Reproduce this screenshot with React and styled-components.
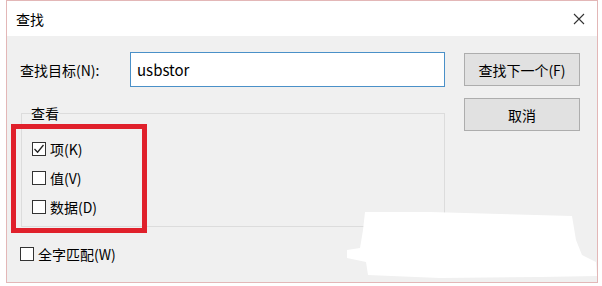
import React from 'react';
import styled, { createGlobalStyle } from 'styled-components';

const GlobalStyle = createGlobalStyle`
    html, body {
        margin: 0;
        padding: 0;
        background: #ffffff;
    }
    body {
        font-family: 'Noto Sans CJK SC', 'Noto Sans', sans-serif;
        color: #000;
    }
`;

const Page = styled.div`
    position: relative;
    width: 602px;
    height: 286px;
    overflow: hidden;
    padding-left: 6px;
    box-sizing: border-box;
`;

const Window = styled.div`
    width: 592px;
    height: 283px;
    box-sizing: border-box;
    border: 1px solid #e3b7b7;
    background: #f0f0f0;
    display: flex;
    flex-direction: column;
`;

const TitleBar = styled.div`
    height: 35px;
    background: #ffffff;
    display: flex;
    align-items: center;
    justify-content: space-between;
    padding: 0 12px 0 9px;
    font-size: 14px;
    flex-shrink: 0;
`;

const Body = styled.div`
    display: flex;
    padding: 16px 0 0 13px;
`;

const Form = styled.div`
    display: flex;
    flex-direction: column;
    width: 425px;
`;

const FieldRow = styled.div`
    display: flex;
    align-items: center;
`;

const Label = styled.label`
    width: 110px;
    font-size: 14px;
`;

const Input = styled.div`
    width: 315px;
    height: 35px;
    box-sizing: border-box;
    border: 1px solid #4a90c8;
    background: #fff;
    padding: 0 6px;
    display: flex;
    align-items: center;
    font-size: 15px;
`;

const Group = styled.fieldset`
    margin: 18px 0 0 1px;
    padding: 13px 0 5px 10px;
    border: 1px solid #dcdcdc;
    width: 424px;
    box-sizing: border-box;
`;

const Legend = styled.legend`
    padding: 0;
    margin-left: -1px;
    font-size: 14px;
    line-height: 16px;
`;

const CheckRow = styled.div`
    height: 29px;
    display: flex;
    align-items: center;
    gap: 4px;
    font-size: 14px;
    margin-top: ${p => p.$top || 0}px;
`;

const Box = styled.span`
    width: 14px;
    height: 14px;
    box-sizing: border-box;
    border: 1px solid #333;
    background: #fff;
    display: inline-flex;
    align-items: center;
    justify-content: center;
    flex-shrink: 0;
`;

const Buttons = styled.div`
    display: flex;
    flex-direction: column;
    gap: 12px;
    margin: 1px 0 0 19px;
`;

const Button = styled.div`
    width: 116px;
    height: 33px;
    box-sizing: border-box;
    border: 1px solid #adadad;
    background: #e1e1e1;
    display: flex;
    align-items: center;
    justify-content: center;
    font-size: 14px;
`;

const Highlight = styled.div`
    position: absolute;
    left: 11px;
    top: 124px;
    width: 136px;
    height: 109px;
    box-sizing: border-box;
    border: 5px solid #e0202b;
`;

const Erase = styled.svg`
    position: absolute;
    left: 0;
    top: 0;
`;

const CheckBox = ({ checked, label, top }) => (
    <CheckRow $top={top}>
        <Box>
            {checked && (
                <svg width="12" height="12" viewBox="0 0 12 12">
                    <path d="M1.5 6 L4.6 9.2 L10.5 2" fill="none" stroke="#222" strokeWidth="1.3" />
                </svg>
            )}
        </Box>
        <span>{label}</span>
    </CheckRow>
);

const App = () => (
    <Page>
        <GlobalStyle />
        <Window>
            <TitleBar>
                <span>查找</span>
                <svg width="12" height="12" viewBox="0 0 12 12">
                    <path d="M1 1 L11 11 M11 1 L1 11" stroke="#333" strokeWidth="1.1" />
                </svg>
            </TitleBar>
            <Body>
                <Form>
                    <FieldRow>
                        <Label>查找目标(N):</Label>
                        <Input>usbstor</Input>
                    </FieldRow>
                    <Group>
                        <Legend>查看</Legend>
                        <CheckBox checked label="项(K)" />
                        <CheckBox label="值(V)" />
                        <CheckBox label="数据(D)" />
                    </Group>
                    <CheckBox label="全字匹配(W)" top={12} />
                </Form>
                <Buttons>
                    <Button>查找下一个(F)</Button>
                    <Button>取消</Button>
                </Buttons>
            </Body>
        </Window>
        <Highlight />
        <Erase width="602" height="286">
            <polygon
                fill="#ffffff"
                points="365,212 430,212 500,214 572,216 576,240 582,255 596,262 597,276 540,277 440,278 368,275 366,262 347,258 347,250 360,248 363,230"
            />
        </Erase>
    </Page>
);

export default App;
